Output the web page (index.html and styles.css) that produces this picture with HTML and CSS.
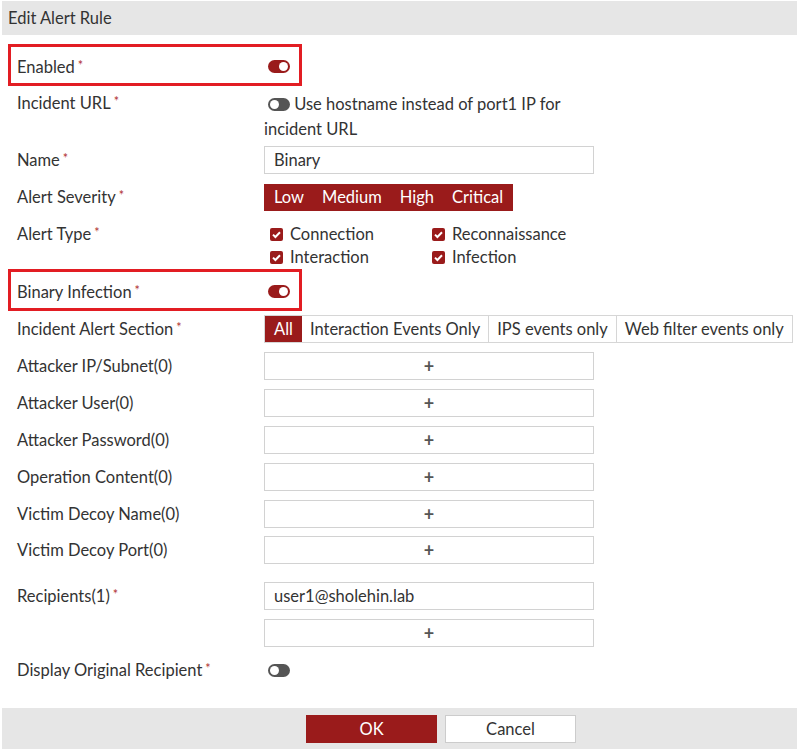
FILE: index.html
```html
<!DOCTYPE html>
<html lang="en">
<head>
    <meta charset="UTF-8">
    <meta name="viewport" content="width=device-width, initial-scale=1.0">
    <title>Edit Alert Rule</title>
    <link rel="stylesheet" href="styles.css">
</head>
<body>
    <div class="dialog">
        <div class="dialog-header">Edit Alert Rule</div>

        <form class="dialog-body">
            <!-- general -->
            <div class="row row-hl">
                <label class="lbl">Enabled<span class="req">*</span></label>
                <span class="toggle on"></span>
            </div>
            <div class="row row-url">
                <label class="lbl">Incident URL<span class="req">*</span></label>
                <div class="ctl ctl-text"><span class="toggle"></span> Use hostname instead of port1 IP for incident URL</div>
            </div>
            <div class="row row-name">
                <label class="lbl">Name<span class="req">*</span></label>
                <div class="field">Binary</div>
            </div>
            <div class="row row-sev">
                <label class="lbl">Alert Severity<span class="req">*</span></label>
                <div class="btn-group">
                    <span>Low</span><span>Medium</span><span>High</span><span>Critical</span>
                </div>
            </div>
            <div class="row row-type">
                <label class="lbl">Alert Type<span class="req">*</span></label>
                <div class="checks">
                    <span class="check">Connection</span>
                    <span class="check">Reconnaissance</span>
                    <span class="check">Interaction</span>
                    <span class="check">Infection</span>
                </div>
            </div>

            <!-- binary infection -->
            <div class="row row-hl row-bin">
                <label class="lbl">Binary Infection<span class="req">*</span></label>
                <span class="toggle on"></span>
            </div>
            <div class="row row-tabs">
                <label class="lbl">Incident Alert Section<span class="req">*</span></label>
                <div class="tabs">
                    <span class="tab active">All</span>
                    <span class="tab">Interaction Events Only</span>
                    <span class="tab">IPS events only</span>
                    <span class="tab">Web filter events only</span>
                </div>
            </div>
            <div class="row">
                <label class="lbl">Attacker IP/Subnet(0)</label>
                <div class="field add">+</div>
            </div>
            <div class="row">
                <label class="lbl">Attacker User(0)</label>
                <div class="field add">+</div>
            </div>
            <div class="row">
                <label class="lbl">Attacker Password(0)</label>
                <div class="field add">+</div>
            </div>
            <div class="row">
                <label class="lbl">Operation Content(0)</label>
                <div class="field add">+</div>
            </div>
            <div class="row">
                <label class="lbl">Victim Decoy Name(0)</label>
                <div class="field add">+</div>
            </div>
            <div class="row row-tight">
                <label class="lbl">Victim Decoy Port(0)</label>
                <div class="field add">+</div>
            </div>

            <!-- recipients -->
            <div class="row row-recip">
                <label class="lbl">Recipients(1)<span class="req">*</span></label>
                <div class="stack">
                    <div class="field">user1@sholehin.lab</div>
                    <div class="field add">+</div>
                </div>
            </div>
            <div class="row row-orig">
                <label class="lbl">Display Original Recipient<span class="req">*</span></label>
                <span class="toggle"></span>
            </div>
        </form>

        <div class="dialog-footer">
            <button type="button" class="btn btn-primary">OK</button>
            <button type="button" class="btn">Cancel</button>
        </div>
    </div>
</body>
</html>
```

FILE: styles.css
```css
body {
    font-family: Lato, "Open Sans", sans-serif;
    font-size: 16.5px;
    color: #333;
    background: #fff;
    margin: 0;
}
.dialog {
    padding: 1px 2px 0;
    height: 748px;
    display: flex;
    flex-direction: column;
}
.dialog-header {
    background: #e6e6e6;
    height: 34px;
    line-height: 34px;
    padding-left: 6px;
    color: #333;
}
.dialog-body {
    flex: 1;
    padding: 9px 0 0 15px;
}
.row {
    display: flex;
    align-items: flex-start;
    margin-top: 9px;
}
.lbl {
    width: 247px;
    flex: none;
    line-height: 28px;
}
.req {
    color: #b03030;
    font-size: 12.5px;
    line-height: 0;
    margin-left: 3px;
    position: relative;
    top: -3px;
}

/* highlighted rows */
.row-hl {
    margin: 0 0 0 -9px;
    width: 294px;
    height: 42px;
    box-sizing: border-box;
    border: 3px solid #e21d23;
    padding-left: 6px;
    align-items: center;
}
.row-hl .lbl {
    line-height: 36px;
    padding-top: 3px;
}
.row-hl .toggle {
    margin-top: 2px;
}
.row-url {
    margin-top: 5px;
}
.row-url .lbl {
    line-height: 25px;
}
.ctl-text {
    width: 330px;
    line-height: 25px;
    padding-top: 1px;
}
.row-name {
    margin-top: 4px;
}
.row-sev {
    margin-top: 10px;
}
.row-sev .lbl {
    line-height: 27px;
}
.row-type {
    margin-top: 12px;
}
.row-type .lbl {
    line-height: 23px;
}
.row-bin {
    margin-top: 0;
}
.row-tabs {
    margin-top: 4px;
}
.row-tight {
    margin-top: 8px;
}
.row-recip {
    margin-top: 18px;
}
.row-orig {
    margin-top: 9px;
}

/* toggles */
.toggle {
    display: inline-block;
    position: relative;
    width: 22px;
    height: 13px;
    border-radius: 7px;
    background: #555;
    margin-left: 4px;
    vertical-align: -1px;
}
.toggle::after {
    content: "";
    position: absolute;
    top: 2px;
    left: 2px;
    width: 9px;
    height: 9px;
    border-radius: 50%;
    background: #fff;
}
.toggle.on {
    background: #9a1b1b;
}
.toggle.on::after {
    left: 11px;
}
.row-orig .toggle {
    margin-top: 8px;
}

/* inputs */
.field {
    width: 330px;
    height: 28px;
    box-sizing: border-box;
    border: 1px solid #d2d2d2;
    line-height: 26px;
    padding-left: 9px;
}
.field.add {
    text-align: center;
    padding-left: 0;
    font-weight: bold;
    font-size: 18px;
    color: #555;
}
.stack .field + .field {
    margin-top: 9px;
}

/* severity */
.btn-group {
    display: flex;
    background: #9a1b1b;
    color: #fff;
    height: 27px;
    line-height: 27px;
    padding: 0 1px;
}
.btn-group span {
    padding: 0 9px;
}

/* alert type */
.checks {
    display: grid;
    grid-template-columns: 162px 162px;
    padding-left: 6px;
    line-height: 23px;
}
.check::before {
    content: "";
    display: inline-block;
    width: 13px;
    height: 13px;
    border-radius: 2px;
    margin-right: 7px;
    vertical-align: -1px;
    background: #9a1b1b url("data:image/svg+xml,%3Csvg xmlns='http://www.w3.org/2000/svg' viewBox='0 0 13 13'%3E%3Cpath d='M3 6.6l2.4 2.4L10 4.3' fill='none' stroke='%23fff' stroke-width='2'/%3E%3C/svg%3E") no-repeat center;
}

/* tabs */
.tabs {
    display: flex;
    flex: none;
    border: 1px solid #d6d6d6;
    height: 28px;
    box-sizing: border-box;
    line-height: 26px;
    white-space: nowrap;
}
.tab {
    padding: 0 8px;
    border-left: 1px solid #d6d6d6;
}
.tab.active {
    background: #9a1b1b;
    color: #fff;
    border-left: none;
    padding: 0 9px;
}
.tab.active + .tab {
    border-left: none;
}

/* footer */
.dialog-footer {
    background: #e6e6e6;
    height: 41px;
    display: flex;
    align-items: center;
    gap: 8px;
    padding-left: 304px;
}
.btn {
    width: 131px;
    height: 28px;
    border: 1px solid #ccc;
    background: #fff;
    font: inherit;
    color: #333;
}
.btn-primary {
    background: #9a1b1b;
    border-color: #9a1b1b;
    color: #fff;
}
```
